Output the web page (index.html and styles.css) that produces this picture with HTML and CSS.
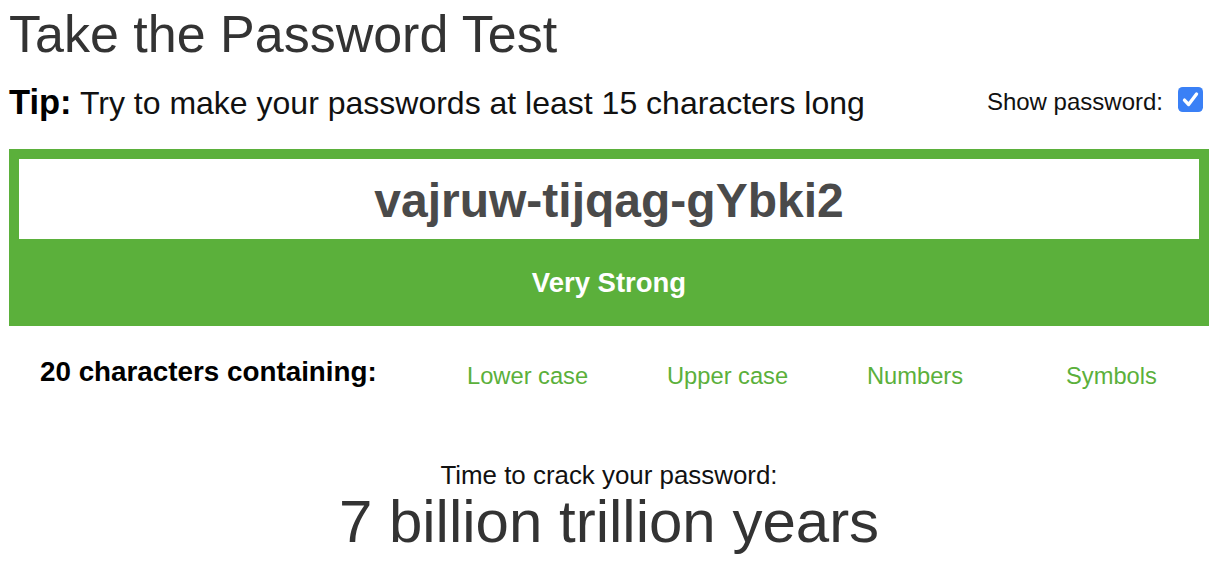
FILE: index.html
```html
<!DOCTYPE html>
<html lang="en">
<head>
<meta charset="utf-8">
<title>Take the Password Test</title>
<link rel="stylesheet" href="styles.css">
</head>
<body>
<main class="page">
  <h1 class="title">Take the Password Test</h1>
  <div class="tip-row">
    <p class="tip"><strong class="tip-label">Tip:</strong> Try to make your passwords at least 15 characters long</p>
    <label class="show">
      <span class="show-text">Show password:</span>
      <span class="check">
        <svg viewBox="0 0 24 24" width="25" height="25" aria-hidden="true">
          <rect x="0" y="0" width="24" height="24" rx="4.5" fill="#3a80f6"/>
          <path d="M6.2 12.6 L10.2 16.8 L17.8 6.8" fill="none" stroke="#fff" stroke-width="3.2" stroke-linecap="round" stroke-linejoin="round"/>
        </svg>
      </span>
    </label>
  </div>
  <section class="meter">
    <div class="pw-box">vajruw-tijqag-gYbki2</div>
    <div class="strength">Very Strong</div>
  </section>
  <div class="chars-row">
    <div class="chars-label">20 characters containing:</div>
    <div class="chars-item">Lower case</div>
    <div class="chars-item">Upper case</div>
    <div class="chars-item">Numbers</div>
    <div class="chars-item">Symbols</div>
  </div>
  <div class="crack">
    <div class="crack-label">Time to crack your password:</div>
    <div class="crack-time">7 billion trillion years</div>
  </div>
</main>
</body>
</html>
```
FILE: styles.css
```css
html, body {
  margin: 0;
  padding: 0;
  background: #ffffff;
}
body {
  font-family: "Liberation Sans", Arial, Helvetica, sans-serif;
  color: #000;
}
.page {
  width: 1200px;
  padding: 9px 9px 0 9px;
}
.title {
  margin: 0;
  font-size: 52px;
  line-height: 51px;
  font-weight: 400;
  color: #333333;
}
.tip-row {
  margin-top: 26px;
  display: flex;
  justify-content: space-between;
  align-items: center;
  height: 32px;
}
.tip {
  margin: 0;
  font-size: 32px;
  line-height: 32px;
  color: #111;
}
.tip-label {
  font-size: 34.5px;
  font-weight: 700;
  color: #000;
}
.show {
  display: flex;
  align-items: center;
  gap: 15px;
  padding-right: 6px;
}
.show-text {
  font-size: 24px;
  line-height: 26px;
  color: #111;
}
.check {
  display: block;
  width: 25px;
  height: 25px;
  margin-top: -5px;
}
.check svg {
  display: block;
}
.meter {
  margin-top: 31px;
  background: #5bb03b;
  padding: 10px 10px 0 10px;
}
.pw-box {
  background: #ffffff;
  height: 80px;
  line-height: 80px;
  padding-top: 2px;
  box-sizing: border-box;
  text-align: center;
  font-size: 48px;
  font-weight: 700;
  color: #4a4a4a;
}
.strength {
  height: 87px;
  line-height: 87px;
  text-align: center;
  color: #ffffff;
  font-size: 27.5px;
  font-weight: 700;
}
.chars-row {
  margin-top: 32px;
  display: grid;
  grid-template-columns: 458px 200px 200px 199px 143px;
  align-items: start;
}
.chars-label {
  padding-left: 31px;
  font-size: 27.8px;
  line-height: 28px;
  font-weight: 700;
  color: #000;
}
.chars-item {
  padding-top: 4px;
  font-size: 23.7px;
  line-height: 28px;
  color: #5bb03b;
}
.crack {
  margin-top: 72px;
  text-align: center;
}
.crack-label {
  font-size: 25.9px;
  line-height: 26px;
  color: #111;
}
.crack-time {
  font-size: 60px;
  line-height: 67px;
  color: #333333;
}
```
